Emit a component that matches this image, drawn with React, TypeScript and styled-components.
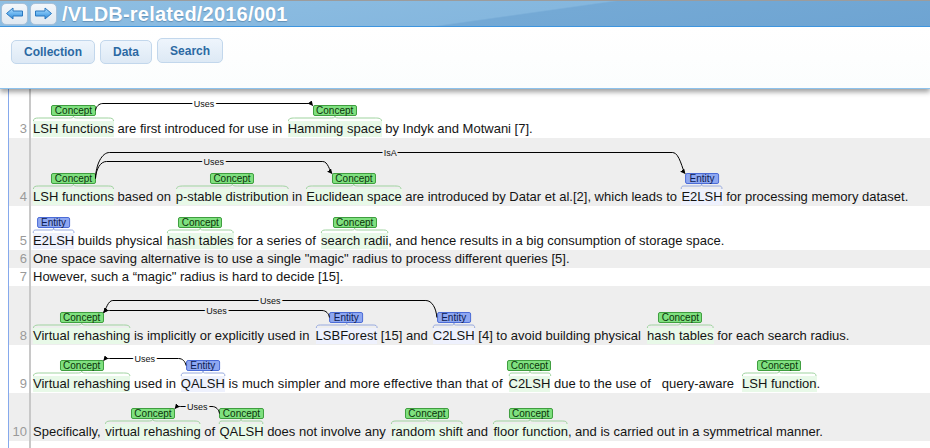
import React, { useLayoutEffect, useRef, useState } from 'react';
import styled, { createGlobalStyle } from 'styled-components';

const GlobalStyle = createGlobalStyle`
  html, body { margin: 0; padding: 0; background: #ffffff; overflow: hidden; }
  body { font-family: "Liberation Sans", Arial, sans-serif; }
`;

type Kind = 'concept' | 'entity';
type AnnSeg = { type: 'ann'; text: string; kind: Kind; id: string; dx: number };
type TextSeg = { type: 'txt'; text: string; ls: number };
type Seg = string | AnnSeg | TextSeg;
type ArcDef = { from: string; to: string; label: string; level: 1 | 2 | 3 };
type RowDef = { n: number; h: number; shade: boolean; segs: Seg[]; arcs?: ArcDef[] };

const A = (text: string, k: 'c' | 'e', id: string, dx = 0): AnnSeg => ({
  type: 'ann',
  text,
  kind: k === 'c' ? 'concept' : 'entity',
  id,
  dx,
});
const T = (text: string, ls: number): TextSeg => ({ type: 'txt', text, ls });

const COLORS = {
  concept: { bg: '#7fe07f', border: '#3f9e3f', text: '#0b330b', hl: '#e8f9e8', brace: '#9fd39f', pad: 2.4 },
  entity: { bg: '#8ea7f1', border: '#4b6bd6', text: '#0c1b52', hl: '#eef1fd', brace: '#98aae0', pad: 3.4 },
};

const LEVELS = { 1: 35, 2: 45, 3: 54 };

const ROWS: RowDef[] = [
  {
    n: 3, h: 49, shade: false,
    segs: [A('LSH functions', 'c', 'r3a'), ' are first introduced for use in ', A('Hamming space', 'c', 'r3b', 1.8), ' by Indyk and Motwani [7].'],
    arcs: [{ from: 'r3a', to: 'r3b', label: 'Uses', level: 1 }],
  },
  {
    n: 4, h: 68, shade: true,
    segs: [A('LSH functions', 'c', 'r4a'), ' based on ', A('p-stable distribution', 'c', 'r4b', 1), ' in ', A('Euclidean space', 'c', 'r4c', 0.55), ' are introduced by Datar et al.[2], which leads to ', A('E2LSH', 'e', 'r4d', 0.75), ' for processing memory dataset.'],
    arcs: [
      { from: 'r4a', to: 'r4d', label: 'IsA', level: 3 },
      { from: 'r4a', to: 'r4c', label: 'Uses', level: 2 },
    ],
  },
  {
    n: 5, h: 44, shade: false,
    segs: [A('E2LSH', 'e', 'r5a'), ' builds physical ', A('hash tables', 'c', 'r5b', 1.05), ' for a series of ', A('search radii', 'c', 'r5c', 1.6), ', and hence results in a big consumption of storage space.'],
  },
  {
    n: 6, h: 18, shade: true,
    segs: ['One space saving alternative is to use a single "magic" radius to process different queries [5].'],
  },
  {
    n: 7, h: 18, shade: false,
    segs: ['However, such a \u201Cmagic" radius is hard to decide [15].'],
  },
  {
    n: 8, h: 59, shade: true,
    segs: [A('Virtual rehashing', 'c', 'r8a'), ' is implicitly or explicitly used in ', A('LSBForest', 'e', 'r8b', 2.5), ' [15] and ', A('C2LSH', 'e', 'r8c', 1.5), ' [4] to avoid building physical ', A('hash tables', 'c', 'r8d', 2.6), ' for each search radius.'],
    arcs: [
      { from: 'r8c', to: 'r8a', label: 'Uses', level: 2 },
      { from: 'r8b', to: 'r8a', label: 'Uses', level: 1 },
    ],
  },
  {
    n: 9, h: 48, shade: false,
    segs: [A('Virtual rehashing', 'c', 'r9a'), ' used in ', A('QALSH', 'e', 'r9b', 1.35), T(' is much simpler and more effective than that of ', 0.1), A('C2LSH', 'c', 'r9c', 2.2), ' due to the use of   query-aware  ', A('LSH function', 'c', 'r9d', 0.9), '.'],
    arcs: [{ from: 'r9b', to: 'r9a', label: 'Uses', level: 1 }],
  },
  {
    n: 10, h: 48, shade: true,
    segs: ['Specifically, ', A('virtual rehashing', 'c', 'r10a', 1), ' of ', A('QALSH', 'c', 'r10b', 0.7), ' does not involve any ', A('random shift', 'c', 'r10c', 1.95), ' and ', A('floor function', 'c', 'r10d', 1.75), ', and is carried out in a symmetrical manner.'],
    arcs: [{ from: 'r10b', to: 'r10a', label: 'Uses', level: 1 }],
  },
];

/* ---------- header ---------- */

const Page = styled.div`
  width: 930px;
  height: 448px;
  overflow: hidden;
  display: flex;
  flex-direction: column;
`;

const Header = styled.header`
  position: relative;
  z-index: 2;
  flex-shrink: 0;
  box-shadow: 0 3px 5px rgba(0, 0, 0, 0.38);
`;

const TopBar = styled.div`
  height: 27px;
  box-sizing: border-box;
  display: flex;
  align-items: center;
  gap: 2px;
  padding-left: 1px;
  border-top: 1px solid #9c9c9c;
  border-bottom: 1px solid #3e95df;
  background: linear-gradient(172deg, #8fbfe3 0%, #85b7de 55%, #74a9d5 56%, #6ea4d2 100%);
`;

const NavButton = styled.div`
  width: 27px;
  height: 22px;
  box-sizing: border-box;
  border: 1px solid #a7c0d8;
  border-radius: 5px;
  background: linear-gradient(to bottom, #f3f7fb, #dfe8f1);
  display: flex;
  align-items: center;
  justify-content: center;
`;

const Title = styled.h1`
  margin: 0 0 0 3px;
  font-family: "Liberation Sans", Arial, sans-serif;
  font-weight: bold;
  font-size: 20px;
  line-height: 22px;
  letter-spacing: 0.2px;
  color: #ffffff;
  text-shadow: 0 1px 1px rgba(30, 70, 110, 0.35);
  white-space: nowrap;
`;

const Panel = styled.div`
  height: 62px;
  box-sizing: border-box;
  display: flex;
  align-items: flex-start;
  gap: 5px;
  padding: 0 11px;
  background: linear-gradient(to bottom, #ffffff, #fbfdfd);
  border-bottom: 1px solid #8dc2ec;
`;

const MenuButton = styled.button<{ $raised?: boolean }>`
  margin-top: ${(p) => (p.$raised ? 11 : 13)}px;
  height: ${(p) => (p.$raised ? 25 : 24)}px;
  box-sizing: border-box;
  padding: 0 12px;
  border: 1px solid #c2d7ec;
  border-radius: 5px;
  background: linear-gradient(to bottom, #eef5fc, #dde9f5);
  color: #2b69a3;
  font-family: "Liberation Sans", Arial, sans-serif;
  font-weight: bold;
  font-size: 12px;
  line-height: 1;
  cursor: pointer;
`;

/* ---------- document ---------- */

const Doc = styled.main`
  flex: 1;
  margin-left: 8px;
  border-left: 1px solid #86a9ec;
  display: flex;
  flex-direction: column;
  position: relative;
  z-index: 1;
`;

const RowBox = styled.div<{ $h: number; $shade: boolean }>`
  display: flex;
  flex-shrink: 0;
  height: ${(p) => p.$h}px;
  background: ${(p) => (p.$shade ? '#eeeeee' : '#ffffff')};
`;

const FillerRow = styled.div`
  display: flex;
  flex: 1;
  background: #ffffff;
`;

const LineNo = styled.div`
  width: 22px;
  flex-shrink: 0;
  box-sizing: border-box;
  padding-right: 2px;
  border-right: 2px solid #c8c8c8;
  display: flex;
  align-items: flex-end;
  justify-content: flex-end;
  color: #9a9a9a;
  font-size: 13px;
  line-height: 18px;
`;

const Content = styled.div`
  flex: 1;
  position: relative;
  display: flex;
  align-items: flex-end;
  padding-left: 2px;
`;

const TextLine = styled.div`
  height: 18px;
  line-height: 18px;
  font-size: 13px;
  color: #141414;
  white-space: pre;
`;

const Spaced = styled.span<{ $ls: number }>`
  letter-spacing: ${(p) => p.$ls}px;
`;

const AnnSpan = styled.span<{ $kind: Kind; $dx: number }>`
  display: inline-block;
  position: relative;
  height: 16px;
  line-height: 16px;
  margin-left: ${(p) => p.$dx}px;
  background: ${(p) => COLORS[p.$kind].hl};
`;

const TypeLabel = styled.span<{ $kind: Kind }>`
  position: absolute;
  left: 50%;
  bottom: calc(100% + 5px);
  transform: translateX(-50%);
  height: 11px;
  box-sizing: border-box;
  padding: 0 ${(p) => COLORS[p.$kind].pad}px;
  border: 1px solid ${(p) => COLORS[p.$kind].border};
  border-radius: 2px;
  background: ${(p) => COLORS[p.$kind].bg};
  color: ${(p) => COLORS[p.$kind].text};
  font-size: 10px;
  line-height: 9px;
  white-space: nowrap;
`;

const BraceSvg = styled.svg`
  position: absolute;
  left: 0;
  bottom: 100%;
  width: 100%;
  height: 5px;
  overflow: visible;
`;

const ArcLayer = styled.svg`
  position: absolute;
  left: 0;
  top: 0;
  width: 100%;
  height: 100%;
  overflow: visible;
  pointer-events: none;
`;

/* ---------- pieces ---------- */

function NavArrow({ dir }: { dir: 'left' | 'right' }) {
  const gid = `navgrad-${dir}`;
  return (
    <svg width="19" height="13" viewBox="0 0 19 13">
      <defs>
        <linearGradient id={gid} x1="0" y1="0" x2="0" y2="1">
          <stop offset="0" stopColor="#b4e0fd" />
          <stop offset="0.5" stopColor="#6cb6f0" />
          <stop offset="1" stopColor="#2f86d4" />
        </linearGradient>
      </defs>
      <g transform={dir === 'right' ? 'translate(19 0) scale(-1 1)' : undefined}>
        <path
          d="M1.5 6.5 L8 1 L8 4 L17.5 4 L17.5 9 L8 9 L8 12 Z"
          fill={`url(#${gid})`}
          stroke="#2a78c0"
          strokeWidth="1"
          strokeLinejoin="round"
        />
      </g>
    </svg>
  );
}

function Brace({ kind }: { kind: Kind }) {
  return (
    <BraceSvg viewBox="0 0 100 5" preserveAspectRatio="none">
      <path
        d="M0.5,5 C0.5,2.5 3,2 7,2 L44,2 C48,2 50,2 50,0 C50,2 52,2 56,2 L93,2 C97,2 99.5,2.5 99.5,5"
        fill="none"
        stroke={COLORS[kind].brace}
        strokeWidth="1"
        vectorEffect="non-scaling-stroke"
      />
    </BraceSvg>
  );
}

function Annotation({ seg }: { seg: AnnSeg }) {
  return (
    <AnnSpan $kind={seg.kind} $dx={seg.dx}>
      <TypeLabel $kind={seg.kind} data-label={seg.id}>
        {seg.kind === 'concept' ? 'Concept' : 'Entity'}
      </TypeLabel>
      <Brace kind={seg.kind} />
      {seg.text}
    </AnnSpan>
  );
}

function Segment({ seg }: { seg: Seg }) {
  if (typeof seg === 'string') return <>{seg}</>;
  if (seg.type === 'txt') return <Spaced $ls={seg.ls}>{seg.text}</Spaced>;
  return <Annotation seg={seg} />;
}

type ArcGeom = { d: string; tx: number; ty: number; label: string };

function Row({ row }: { row: RowDef }) {
  const ref = useRef<HTMLDivElement>(null);
  const [geoms, setGeoms] = useState<ArcGeom[]>([]);

  useLayoutEffect(() => {
    const compute = () => {
      const el = ref.current;
      if (!el || !row.arcs) return;
      const base = el.getBoundingClientRect();
      const rect = (id: string) => {
        const r = el.querySelector(`[data-label="${id}"]`)!.getBoundingClientRect();
        return { l: r.left - base.left, r: r.right - base.left, t: r.top - base.top, b: r.bottom - base.top };
      };
      const h = base.height;
      setGeoms(
        row.arcs.map((a) => {
          const s = rect(a.from);
          const e = rect(a.to);
          const yh = Math.round(h - LEVELS[a.level]) + 0.5;
          const toRight = e.l > s.l;
          const d = toRight ? 1 : -1;
          const sx = toRight ? s.r : s.l;
          const sy = (s.t + s.b) / 2;
          const ex = toRight ? e.l : e.r;
          const ey = e.t + 0.5;
          const r1 = sy - yh;
          const r2 = ey - yh;
          const dx1 = 5 + r1 * 0.35;
          const dx2 = 5 + r2 * 0.35;
          const path =
            `M ${sx} ${sy} ` +
            `C ${sx + d * 0.5} ${sy - r1 * 0.55}, ${sx + d * dx1 * 0.45} ${yh}, ${sx + d * dx1} ${yh} ` +
            `L ${ex - d * dx2} ${yh} ` +
            `C ${ex - d * dx2 * 0.45} ${yh}, ${ex - d * 2.5} ${ey - 3}, ${ex} ${ey}`;
          return { d: path, tx: (sx + ex) / 2, ty: yh, label: a.label };
        })
      );
    };
    compute();
    if (document.fonts && document.fonts.ready) document.fonts.ready.then(compute);
  }, [row]);

  const bg = row.shade ? '#eeeeee' : '#ffffff';
  const markerId = `arrow-${row.n}`;

  return (
    <RowBox $h={row.h} $shade={row.shade}>
      <LineNo>{row.n}</LineNo>
      <Content ref={ref}>
        <TextLine>
          {row.segs.map((s, i) => (
            <Segment key={i} seg={s} />
          ))}
        </TextLine>
        {row.arcs && (
          <ArcLayer>
            <defs>
              <marker id={markerId} viewBox="0 0 10 10" refX="9" refY="5" markerWidth="5" markerHeight="5" orient="auto">
                <path d="M0,0 L10,5 L0,10 z" fill="#000" />
              </marker>
            </defs>
            {geoms.map((g, i) => (
              <g key={i}>
                <path d={g.d} fill="none" stroke="#000" strokeWidth="1" markerEnd={`url(#${markerId})`} />
                <text
                  x={g.tx}
                  y={g.ty + 3}
                  textAnchor="middle"
                  fontSize="9"
                  fontFamily='"Liberation Sans", Arial, sans-serif'
                  fill="#111"
                  stroke={bg}
                  strokeWidth="4"
                  paintOrder="stroke"
                >
                  {g.label}
                </text>
              </g>
            ))}
          </ArcLayer>
        )}
      </Content>
    </RowBox>
  );
}

export default function App() {
  return (
    <Page>
      <GlobalStyle />
      <Header>
        <TopBar>
          <NavButton>
            <NavArrow dir="left" />
          </NavButton>
          <NavButton>
            <NavArrow dir="right" />
          </NavButton>
          <Title>/VLDB-related/2016/001</Title>
        </TopBar>
        <Panel>
          <MenuButton>Collection</MenuButton>
          <MenuButton>Data</MenuButton>
          <MenuButton $raised>Search</MenuButton>
        </Panel>
      </Header>
      <Doc>
        {ROWS.map((r) => (
          <Row key={r.n} row={r} />
        ))}
        <FillerRow>
          <LineNo />
        </FillerRow>
      </Doc>
    </Page>
  );
}
